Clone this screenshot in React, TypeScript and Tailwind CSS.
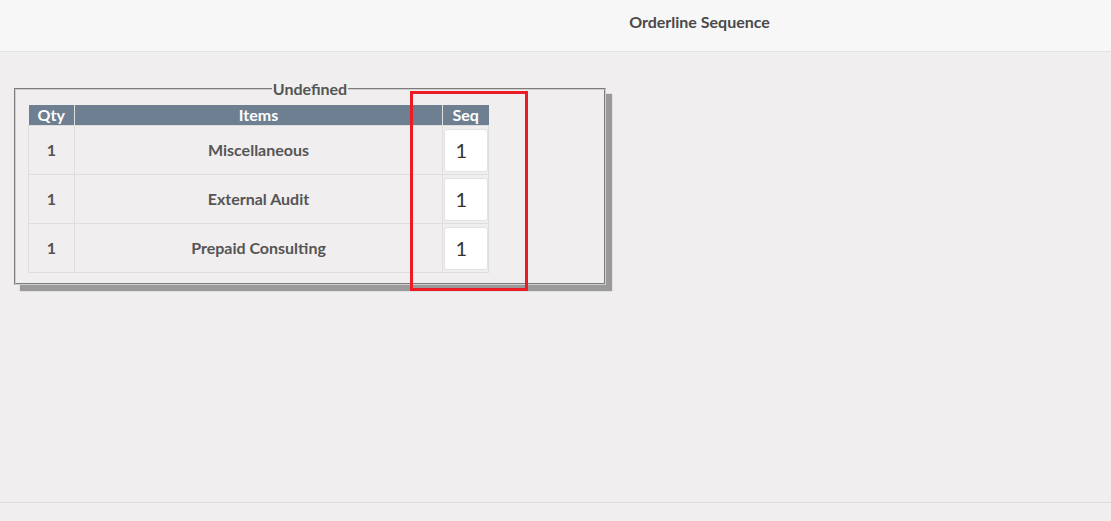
import React from 'react';

const rows = [
  { qty: 1, item: 'Miscellaneous', seq: 1 },
  { qty: 1, item: 'External Audit', seq: 1 },
  { qty: 1, item: 'Prepaid Consulting', seq: 1 },
];

export default function App() {
  return (
    <div className="relative w-[1111px] h-[521px] bg-[#f0eeef] font-['Lato','Liberation_Sans',sans-serif] overflow-hidden">
      {/* 상단 바 */}
      <header className="h-[52px] bg-[#f7f7f7] border-b border-[#e2e2e2] flex items-center justify-center pl-[288px] pb-[7px]">
        <h1 className="text-[16px] font-bold text-[#4a4a4a]">Orderline Sequence</h1>
      </header>

      <main className="h-[450px] pt-[28px] pl-[14px]">
        <fieldset className="w-[592px] h-[205px] border-2 [border-style:groove] border-[#d0d0d0] shadow-[6px_6px_1px_#9a9a9a] px-[12px] pt-[7px]">
          <legend className="mx-auto px-[1px] text-[16px] leading-[18px] font-bold text-[#555]">Undefined</legend>
          <table className="border-collapse text-[16px] font-bold text-[#555]">
            <thead>
              <tr className="bg-[#6e7f91] text-white h-[20px] leading-[20px]">
                <th className="w-[46px] border-r border-[#e0e0e0] font-bold">Qty</th>
                <th className="w-[368px] border-r border-[#e0e0e0] font-bold">Items</th>
                <th className="w-[46px] font-bold">Seq</th>
              </tr>
            </thead>
            <tbody>
              {rows.map((r) => (
                <tr key={r.item} className="h-[49px]">
                  <td className="border border-[#dedede] text-center">{r.qty}</td>
                  <td className="border border-[#dedede] text-center">{r.item}</td>
                  <td className="border border-[#dedede] p-0">
                    <div className="mx-auto w-[44px] h-[43px] bg-white border border-[#e2e2e2] rounded-[3px] flex items-center pl-[11px] text-[20px] font-normal text-[#333]">
                      {r.seq}
                    </div>
                  </td>
                </tr>
              ))}
            </tbody>
          </table>
        </fieldset>
      </main>

      <footer className="h-[19px] border-t border-[#dcdcdc]" />

      {/* 강조 표시 */}
      <div className="absolute left-[410px] top-[91px] w-[118px] h-[200px] border-[3px] border-[#ec1c24]" />
    </div>
  );
}
